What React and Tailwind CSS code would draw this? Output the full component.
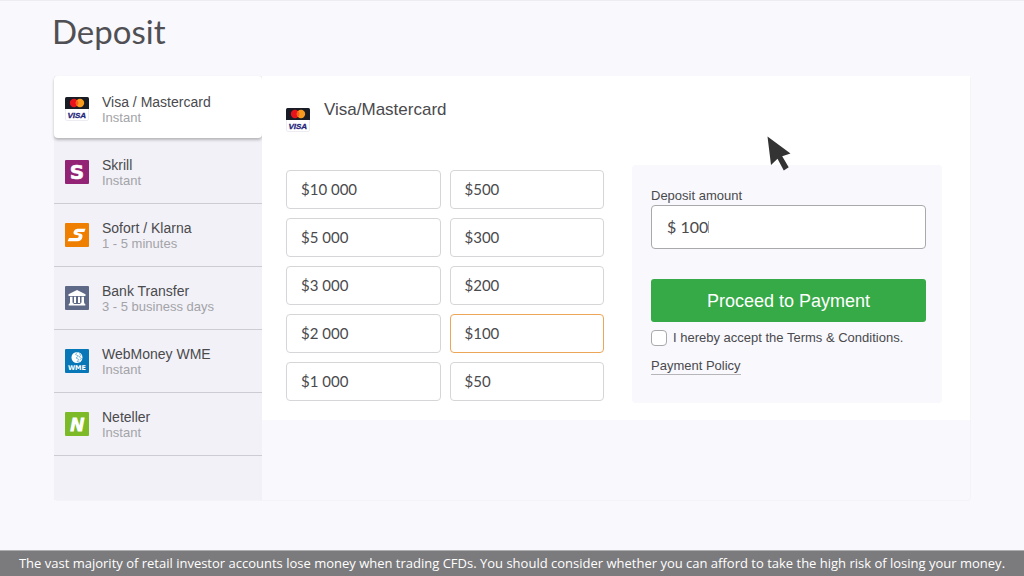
import React, { useState } from 'react';

const METHODS = [
  { id: 'visa', name: 'Visa / Mastercard', time: 'Instant', Icon: CardIcon },
  { id: 'skrill', name: 'Skrill', time: 'Instant', Icon: SkrillIcon },
  { id: 'sofort', name: 'Sofort / Klarna', time: '1 - 5 minutes', Icon: SofortIcon },
  { id: 'bank', name: 'Bank Transfer', time: '3 - 5 business days', Icon: BankIcon },
  { id: 'webmoney', name: 'WebMoney WME', time: 'Instant', Icon: WebMoneyIcon },
  { id: 'neteller', name: 'Neteller', time: 'Instant', Icon: NetellerIcon },
];

const AMOUNTS = ['10 000', '500', '5 000', '300', '3 000', '200', '2 000', '100', '1 000', '50'];

function CardIcon() {
  return (
    <svg className="size-6 shrink-0" viewBox="0 0 24 24" aria-hidden="true">
      <rect x="0.5" y="0.5" width="23" height="23" rx="1.5" fill="#fff" stroke="#ececf2" />
      <path d="M0 12V1.500Q0 0 1.500 0H22.500Q24 0 24 1.500V12Z" fill="#191c24" />
      <circle cx="9" cy="6" r="4.200" fill="#e8121c" />
      <circle cx="15" cy="6" r="4.200" fill="#f79a1e" />
      <path d="M12 3.060a4.200 4.200 0 0 1 0 5.880a4.200 4.200 0 0 1 0-5.880Z" fill="#f9601b" />
      <text x="11.800" y="21" textAnchor="middle" fontFamily="Liberation Sans, sans-serif" fontSize="8" fontWeight="700" fontStyle="italic" fill="#25257c" stroke="#25257c" strokeWidth="0.300">VISA</text>
    </svg>
  );
}

function SkrillIcon() {
  return (
    <svg className="size-6 shrink-0" viewBox="0 0 24 24" aria-hidden="true">
      <rect width="24" height="24" rx="1" fill="#932375" />
      <text x="12" y="19" textAnchor="middle" fontFamily="DejaVu Sans, sans-serif" fontSize="20" fontWeight="700" fill="#fff" stroke="#fff" strokeWidth="0.600">S</text>
    </svg>
  );
}

function SofortIcon() {
  return (
    <svg className="size-6 shrink-0" viewBox="0 0 24 24" aria-hidden="true">
      <rect width="24" height="24" rx="1" fill="#ee7f00" />
      <path d="M20.500 5.800H12.500Q9.600 5.800 8.700 8.500Q7.800 11.600 11 11.900L13.200 12.200Q14 12.400 13.700 13.400Q13.400 14.900 11.800 14.900H4L2.600 18.300H12.500Q16.300 18.300 17.300 14.500Q18.300 10.900 15 10.400L12.600 10.100Q12 9.900 12.300 9.400Q12.500 9 13.300 9H19.300Z" fill="#fff" />
    </svg>
  );
}

function BankIcon() {
  return (
    <svg className="size-6 shrink-0" viewBox="0 0 24 24" aria-hidden="true">
      <rect width="24" height="24" rx="1" fill="#5e6887" />
      <g fill="#fff">
        <path d="M12 4L20.500 8.300V10H3.500V8.300Z" />
        <path d="M5 10.800H7.500V17H5ZM9 10.800H11V17H9ZM13 10.800H15V17H13ZM16.500 10.800H19V17H16.500Z" />
        <path d="M4.500 16.800H8.500V18H15.500V16.800H19.500V18H20.300V19.500H3.700V18H4.500Z" />
      </g>
    </svg>
  );
}

function WebMoneyIcon() {
  return (
    <svg className="size-6 shrink-0" viewBox="0 0 24 24" aria-hidden="true">
      <rect width="24" height="24" rx="1" fill="#0877b8" />
      <circle cx="12" cy="8.500" r="5.500" fill="#fff" />
      <path d="M12.500 3L10.500 5.500L13.500 7L11 9L14 10.500L12 12.500L15.500 13.500" fill="none" stroke="#4b9dcc" strokeWidth="0.700" />
      <path d="M14 4.500L16 6.200L14.200 8L16.500 9.500L15 11.300" fill="none" stroke="#4b9dcc" strokeWidth="0.700" />
      <text x="12" y="21.300" textAnchor="middle" fontFamily="DejaVu Sans, sans-serif" fontSize="6.500" fontWeight="700" fill="#fff">WME</text>
    </svg>
  );
}

function NetellerIcon() {
  return (
    <svg className="size-6 shrink-0" viewBox="0 0 24 24" aria-hidden="true">
      <rect width="24" height="24" rx="1" fill="#7dba28" />
      <text x="12" y="18.500" textAnchor="middle" fontFamily="Liberation Sans, sans-serif" fontSize="18" fontWeight="700" fontStyle="italic" fill="#fff" stroke="#fff" strokeWidth="1.200">N</text>
    </svg>
  );
}

function Pointer() {
  return (
    <svg className="absolute right-[179px] top-[60px] h-9 w-6" viewBox="0 0 24 36" aria-hidden="true">
      <path d="M0.500 0.500L23.500 17.500L15.200 20.300L21.700 31.300L16.800 34.500L10.500 22.700L4 29Z" fill="#333" />
    </svg>
  );
}

function App() {
  const [method, setMethod] = useState('visa');
  const [amount, setAmount] = useState('100');
  const [accepted, setAccepted] = useState(false);

  return (
    <div className="flex min-h-screen flex-col border-t border-[#edecf1] bg-[#f8f8fd] font-['Liberation_Sans',Arial,sans-serif] text-[#4a4a4d]">
      <main className="flex-1 pb-12 pl-[54px] pr-[53px] pt-[10px]">
        <h1 className="-ml-0.5 mb-[25px] font-[Lato,sans-serif] text-[33px] leading-10 text-[#505054]">Deposit</h1>

        <div className="relative flex min-h-[425px] rounded border-b border-r border-[#f3f3f8]">
          {/* Payment methods */}
          <nav className="w-[208px] shrink-0 bg-[#f2f1f7]">
            {METHODS.map(({ id, name, time, Icon }) => (
              <button
                key={id}
                type="button"
                onClick={() => setMethod(id)}
                className={`flex w-full items-center gap-[13px] pl-[11px] text-left ${method === id ? 'mb-[3px] h-[62px] rounded bg-white pt-1 shadow-[0_2px_3px_rgba(0,0,0,0.25)]' : 'h-[63px] border-b border-[#cdccd4]'}`}
              >
                <Icon />
                <span className="pt-0.5">
                  <span className="block text-sm leading-4">{name}</span>
                  <span className="block text-[13px] leading-4 text-[#a3a3a8]">{time}</span>
                </span>
              </button>
            ))}
          </nav>

          {/* Selected method */}
          <section className="flex-1 self-start bg-white pb-[17px] pl-6 pr-7">
            <div className="flex gap-[14px] pt-6">
              <span className="pt-2"><CardIcon /></span>
              <h2 className="text-[17px] leading-5">Visa/Mastercard</h2>
            </div>

            <div className="mt-[33px] flex gap-7">
              <div className="mt-[5px] grid flex-1 grid-cols-2 gap-[9px] self-start">
                {AMOUNTS.map((value) => (
                  <button
                    key={value}
                    type="button"
                    onClick={() => setAmount(value)}
                    className={`h-[39px] rounded border bg-white px-[14px] text-left font-[Lato,sans-serif] text-[15px] ${value === amount ? 'border-[#eda657]' : 'border-[#d6d6d8]'}`}
                  >
                    ${value}
                  </button>
                ))}
              </div>

              <form className="w-[310px] rounded bg-[#f8f8fd] pb-[26px] pl-[19px] pr-4 pt-[23px]" onSubmit={(e) => e.preventDefault()}>
                <label htmlFor="amount" className="block text-[13px] leading-4">Deposit amount</label>
                <div className="mt-px flex h-11 items-center rounded border border-[#a9a9ac] bg-white pl-[15px]">
                  <input
                    id="amount"
                    type="text"
                    value={`$ ${amount}`}
                    onChange={(e) => setAmount(e.target.value.replace(/^\$\s*/, ''))}
                    className="field-sizing-content font-[Lato,sans-serif] text-base outline-none"
                  />
                  <span className="h-3 w-px bg-[#a9a9ac]" />
                </div>

                <button type="submit" className="mt-[30px] h-[43px] w-full rounded-[3px] bg-[#36aa47] text-lg text-white">
                  Proceed to Payment
                </button>

                <div className="mt-2 flex items-center gap-[6px]">
                  <input
                    id="terms"
                    type="checkbox"
                    checked={accepted}
                    onChange={(e) => setAccepted(e.target.checked)}
                    className="size-4 shrink-0 appearance-none rounded border border-[#a9a9ac] bg-white checked:bg-[#36aa47]"
                  />
                  <label htmlFor="terms" className="text-[13px] leading-4">I hereby accept the Terms &amp; Conditions.</label>
                </div>

                <a href="#policy" className="mt-3 inline-block border-b border-[#b5b5ba] text-[13px] leading-4">Payment Policy</a>
              </form>
            </div>
          </section>

          <Pointer />
        </div>
      </main>

      <footer className="border-t border-[#aeaeb0] bg-[#7b7a7c] px-2 py-[2px] text-center font-['Open_Sans',sans-serif] text-[13px] leading-[21px] text-white">
        The vast majority of retail investor accounts lose money when trading CFDs. You should consider whether you can afford to take the high risk of losing your money.
      </footer>
    </div>
  );
}

export default App;
